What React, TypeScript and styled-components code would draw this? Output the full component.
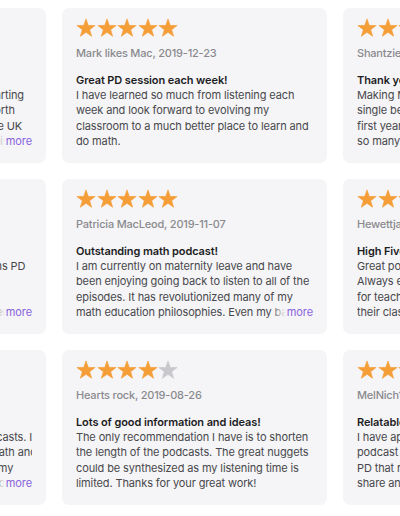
import React from "react";
import styled, { createGlobalStyle } from "styled-components";

const GlobalStyle = createGlobalStyle`
  html, body {
    margin: 0;
    padding: 0;
    background: #ffffff;
    overflow: hidden;
  }
  body {
    font-family: Inter, "Noto Sans", "Liberation Sans", sans-serif;
    -webkit-font-smoothing: antialiased;
  }
`;

const Viewport = styled.div`
  width: 400px;
  height: 516px;
  overflow: hidden;
`;

const Shelf = styled.div`
  display: grid;
  grid-template-rows: repeat(3, 155px);
  grid-auto-flow: column;
  grid-auto-columns: 265px;
  gap: 16px;
  padding-top: 8px;
  margin-left: -219px;
  width: max-content;
`;

const Card = styled.article`
  background: #f5f5f7;
  border-radius: 7px;
  padding: 10px 14px 0;
  display: flex;
  flex-direction: column;
  box-sizing: border-box;
  overflow: hidden;
`;

const Stars = styled.div`
  display: flex;
  gap: 0.6px;
  height: 20px;
`;

const StarIcon = styled.svg<{ $on: boolean }>`
  width: 20px;
  height: 20px;
  flex: none;
  fill: ${(p) => (p.$on ? "#f59e38" : "#c8c8cc")};
  stroke: ${(p) => (p.$on ? "#f59e38" : "#c8c8cc")};
  stroke-width: 0.8;
  stroke-linejoin: round;
`;

const Author = styled.div`
  margin-top: 7px;
  font-size: 11px;
  line-height: 16px;
  font-weight: 500;
  letter-spacing: -0.2px;
  color: #8a8a8e;
  white-space: nowrap;
`;

const Title = styled.h3`
  margin: 12px 0 0;
  font-size: 11px;
  line-height: 15.2px;
  font-weight: 600;
  letter-spacing: -0.1px;
  color: #1d1d1f;
  white-space: nowrap;
`;

const Body = styled.div`
  position: relative;
  max-height: 60.8px;
  overflow: hidden;
`;

const BodyText = styled.p`
  margin: 0;
  font-size: 11px;
  line-height: 15.2px;
  letter-spacing: -0.12px;
  color: #48484c;
  white-space: pre;
`;

const More = styled.button`
  position: absolute;
  right: 0;
  bottom: 0;
  border: 0;
  margin: 0;
  padding: 0 0 0 16px;
  font: inherit;
  font-size: 11px;
  line-height: 15.2px;
  letter-spacing: -0.1px;
  color: #8b63dd;
  background: linear-gradient(to right, rgba(245, 245, 247, 0), #f5f5f7 15px);
  cursor: pointer;
`;

const STAR_PATH =
  "M12 1.1 L14.7 8.88 L22.94 9.05 L16.37 14.02 L18.76 21.9 L12 17.2 L5.24 21.9 L7.63 14.02 L1.06 9.05 L9.3 8.88 Z";

type Review = {
  rating: number;
  author: string;
  date: string;
  title: string;
  body: string;
  more?: boolean;
};

const reviews: Review[] = [
  {
    rating: 5,
    author: "Jenny in Yorkshire",
    date: "2020-01-12",
    title: "So inspiring!",
    body:
      "I discovered this podcast when I was starting\nout as a brand new teacher, up in the North\nof England. Greetings from one fan in the UK\nwho always looks forward to the next episode",
    more: true,
  },
  {
    rating: 5,
    author: "mathteach22",
    date: "2019-11-19",
    title: "Love it",
    body:
      "Your podcast is by far the best free maths PD\nI have found anywhere online.\nHighly recommended to all.\nEvery episode gets me thinking and reflecting",
    more: true,
  },
  {
    rating: 5,
    author: "Mr. Kirsch",
    date: "2019-08-30",
    title: "Great ideas",
    body:
      "I have now listened to all your math podcasts. I\nhave learned so much about teaching math and\nI am really excited to try new ideas with my\nstudents this year. Thanks for the best podcast",
    more: true,
  },
  {
    rating: 5,
    author: "Mark likes Mac",
    date: "2019-12-23",
    title: "Great PD session each week!",
    body:
      "I have learned so much from listening each\nweek and look forward to evolving my\nclassroom to a much better place to learn and\ndo math.",
  },
  {
    rating: 5,
    author: "Patricia MacLeod",
    date: "2019-11-07",
    title: "Outstanding math podcast!",
    body:
      "I am currently on maternity leave and have\nbeen enjoying going back to listen to all of the\nepisodes. It has revolutionized many of my\nmath education philosophies. Even my baby loves it",
    more: true,
  },
  {
    rating: 4,
    author: "Hearts rock",
    date: "2019-08-26",
    title: "Lots of good information and ideas!",
    body:
      "The only recommendation I have is to shorten\nthe length of the podcasts. The great nuggets\ncould be synthesized as my listening time is\nlimited. Thanks for your great work!",
  },
  {
    rating: 5,
    author: "Shantziemom",
    date: "2019-10-02",
    title: "Thank you!",
    body:
      "Making Math Moments has been the\nsingle best PD I have done in my\nfirst year of teaching. I have learned\nso many new ideas that I use every day.",
  },
  {
    rating: 5,
    author: "Hewettjay",
    date: "2019-10-20",
    title: "High Five!",
    body:
      "Great podcast for math teachers.\nAlways engaging and full of ideas\nfor teachers looking to improve\ntheir classroom culture.",
  },
  {
    rating: 5,
    author: "MelNich12",
    date: "2019-08-14",
    title: "Relatable and inspiring",
    body:
      "I have appreciated listening to this\npodcast on my commute. It is the\nPD that really matters. I love to\nshare and discuss ideas with colleagues.",
  },
];

function StarRow({ rating }: { rating: number }) {
  return (
    <Stars aria-label={`${rating} out of 5 stars`}>
      {[0, 1, 2, 3, 4].map((i) => (
        <StarIcon key={i} $on={i < rating} viewBox="0 0 24 24">
          <path d={STAR_PATH} />
        </StarIcon>
      ))}
    </Stars>
  );
}

function ReviewCard({ review }: { review: Review }) {
  return (
    <Card>
      <StarRow rating={review.rating} />
      <Author>
        {review.author}, {review.date}
      </Author>
      <Title>{review.title}</Title>
      <Body>
        <BodyText>{review.body}</BodyText>
        {review.more && <More>more</More>}
      </Body>
    </Card>
  );
}

export default function App() {
  return (
    <Viewport>
      <GlobalStyle />
      <Shelf>
        {reviews.map((r, i) => (
          <ReviewCard key={i} review={r} />
        ))}
      </Shelf>
    </Viewport>
  );
}
